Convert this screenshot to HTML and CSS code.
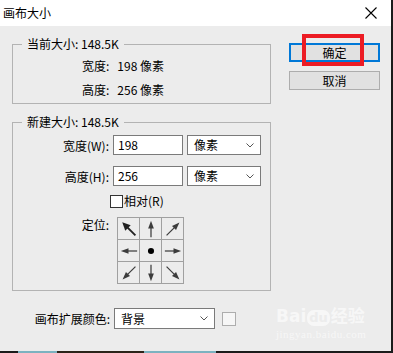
FILE: index.html
```html
<!DOCTYPE html>
<html lang="zh">
<head>
<meta charset="utf-8"/>
<title>画布大小</title>
<link rel="stylesheet" href="styles.css">
</head>
<body>
<div class="dialog">
  <div class="titlebar">
    <span class="title">画布大小</span>
    <svg class="close" width="12" height="12" viewBox="0 0 12 12"><path d="M0.5 0.5L11.5 11.5M11.5 0.5L0.5 11.5" stroke="#000" stroke-width="1.1" fill="none"/></svg>
  </div>
  <div class="content">
    <div class="main">
      <fieldset class="group group-current">
        <legend>当前大小: 148.5K</legend>
        <div class="info">宽度:<span class="val">198 像素</span></div>
        <div class="info">高度:<span class="val">256 像素</span></div>
      </fieldset>

      <fieldset class="group group-new">
        <legend>新建大小: 148.5K</legend>
        <div class="row">
          <label>宽度(W):</label>
          <div class="input">198</div>
          <div class="select">像素<svg class="chev" width="8" height="5" viewBox="0 0 8 5"><path d="M0.5 0.5L4 4L7.5 0.5" stroke="#555" fill="none"/></svg></div>
        </div>
        <div class="row row-h">
          <label>高度(H):</label>
          <div class="input">256</div>
          <div class="select">像素<svg class="chev" width="8" height="5" viewBox="0 0 8 5"><path d="M0.5 0.5L4 4L7.5 0.5" stroke="#555" fill="none"/></svg></div>
        </div>
        <div class="check-row">
          <span class="checkbox"></span>相对(R)
        </div>
        <div class="anchor-row">
          <label>定位:</label>
          <div class="anchor">
            <div class="cell"><svg viewBox="0 0 23 23"><g class="bold" transform="rotate(-45 11.5 11.5)"><line x1="11.5" y1="21" x2="11.5" y2="8"/><polygon points="11.5,1.5 7.5,10 15.5,10"/></g></svg></div>
            <div class="cell"><svg viewBox="0 0 23 23"><g><line x1="11.5" y1="20" x2="11.5" y2="9"/><polygon points="11.5,3 8.5,11 14.5,11"/></g></svg></div>
            <div class="cell"><svg viewBox="0 0 23 23"><g transform="rotate(45 11.5 11.5)"><line x1="11.5" y1="21" x2="11.5" y2="8"/><polygon points="11.5,2 8.5,10 14.5,10"/></g></svg></div>
            <div class="cell"><svg viewBox="0 0 23 23"><g transform="rotate(-90 11.5 11.5)"><line x1="11.5" y1="20" x2="11.5" y2="9"/><polygon points="11.5,3 8.5,11 14.5,11"/></g></svg></div>
            <div class="cell"><svg viewBox="0 0 23 23"><circle cx="11.5" cy="11.5" r="3.2" fill="#000"/></svg></div>
            <div class="cell"><svg viewBox="0 0 23 23"><g transform="rotate(90 11.5 11.5)"><line x1="11.5" y1="20" x2="11.5" y2="9"/><polygon points="11.5,3 8.5,11 14.5,11"/></g></svg></div>
            <div class="cell"><svg viewBox="0 0 23 23"><g transform="rotate(-135 11.5 11.5)"><line x1="11.5" y1="21" x2="11.5" y2="8"/><polygon points="11.5,2 8.5,10 14.5,10"/></g></svg></div>
            <div class="cell"><svg viewBox="0 0 23 23"><g transform="rotate(180 11.5 11.5)"><line x1="11.5" y1="20" x2="11.5" y2="9"/><polygon points="11.5,3 8.5,11 14.5,11"/></g></svg></div>
            <div class="cell"><svg viewBox="0 0 23 23"><g transform="rotate(135 11.5 11.5)"><line x1="11.5" y1="21" x2="11.5" y2="8"/><polygon points="11.5,2 8.5,10 14.5,10"/></g></svg></div>
          </div>
        </div>
      </fieldset>

      <div class="extend">
        <label>画布扩展颜色:</label>
        <div class="select select-wide">背景<svg class="chev" width="8" height="5" viewBox="0 0 8 5"><path d="M0.5 0.5L4 4L7.5 0.5" stroke="#555" fill="none"/></svg></div>
        <span class="swatch"></span>
      </div>
    </div>

    <div class="buttons">
      <div class="btn btn-default">确定</div>
      <div class="btn">取消</div>
    </div>
  </div>

  <!-- red highlight drawn over the OK button -->
  <div class="highlight"></div>

  <div class="watermark">
    <div class="wm-logo">Bai<span class="wm-du">du</span>经验</div>
    <div class="wm-url">jingyan.baidu.com</div>
  </div>
</div>
</body>
</html>
```

FILE: styles.css
```css
html, body {
    margin: 0;
    padding: 0;
}

body {
    width: 393px;
    height: 353px;
    overflow: hidden;
    font-family: "Noto Sans CJK SC", "Noto Sans", sans-serif;
    font-size: 12px;
    color: #000;
    background: linear-gradient(to right, #1b1b1b 18px, #7cb2c0 18px 57px, #2b2419 57px 144px, #7cb2c0 144px 216px, #1b1b1b 216px);
}

.dialog {
    position: relative;
    width: 391px;
    height: 351px;
    background-color: #ececec;
    overflow: hidden;
}

.titlebar {
    height: 26px;
    background-color: #fff;
    display: flex;
    align-items: center;
    justify-content: space-between;
    padding: 0 14px 0 3px;
}

.title {
    font-size: 12px;
    line-height: 16px;
}

.close {
    display: block;
}

.content {
    display: flex;
    padding-top: 10px;
}

.main {
    padding-left: 12px;
    width: 259px;
}

.group {
    margin: 0;
    border: 1px solid #b3b3b3;
    min-width: 0;
}

.group legend {
    margin-left: 9px;
    padding: 0 5px;
    line-height: 16px;
}

.group-current {
    padding: 2px 0 1px 0;
}

.info {
    line-height: 24px;
    padding-left: 69px;
}

.info .val {
    margin-left: 8px;
}

.group-new {
    margin-top: 10px;
    padding: 5px 0 6px 0;
}

.row {
    display: flex;
    align-items: center;
    gap: 4px;
    height: 20px;
}

.row-h {
    margin-top: 11px;
}

.row label {
    width: 96px;
    text-align: right;
}

.input {
    box-sizing: border-box;
    width: 70px;
    height: 20px;
    border: 1px solid #7a7a7a;
    background-color: #fff;
    padding-left: 4px;
    line-height: 18px;
}

.select {
    box-sizing: border-box;
    width: 74px;
    height: 20px;
    border: 1px solid #7a7a7a;
    background-color: #fff;
    padding: 0 6px 0 6px;
    line-height: 18px;
    display: flex;
    align-items: center;
    justify-content: space-between;
}

.chev {
    display: block;
}

.check-row {
    display: flex;
    align-items: center;
    margin-top: 8px;
    padding-left: 97px;
    height: 14px;
    line-height: 14px;
}

.checkbox {
    box-sizing: border-box;
    width: 13px;
    height: 13px;
    border: 1px solid #333;
    background-color: #fff;
    margin-right: 1px;
}

.anchor-row {
    display: flex;
    align-items: flex-start;
    margin-top: 9px;
}

.anchor-row label {
    width: 96px;
    text-align: right;
    line-height: 16px;
}

.anchor {
    margin-left: 8px;
    display: grid;
    grid-template-columns: repeat(3, 22px);
    grid-template-rows: repeat(3, 22px);
    border-top: 1px solid #a0a0a0;
    border-left: 1px solid #a0a0a0;
}

.cell {
    border-right: 1px solid #a0a0a0;
    border-bottom: 1px solid #a0a0a0;
}

.cell svg {
    display: block;
    width: 22px;
    height: 22px;
}

.cell line {
    stroke: #3c3c3c;
    stroke-width: 1.3;
}

.cell polygon {
    fill: #3c3c3c;
}

.cell .bold line {
    stroke: #222;
    stroke-width: 2;
}

.cell .bold polygon {
    fill: #222;
}

.extend {
    display: flex;
    align-items: center;
    margin-top: 17px;
    gap: 4px;
}

.extend label {
    width: 98px;
    text-align: right;
}

.select-wide {
    width: 101px;
    height: 21px;
}

.swatch {
    box-sizing: border-box;
    width: 14px;
    height: 14px;
    margin-left: 3px;
    border: 1px solid #adadad;
    background-color: #f6f6f6;
}

.buttons {
    margin-left: 18px;
    width: 91px;
}

.btn {
    box-sizing: border-box;
    height: 19px;
    border: 1px solid #adadad;
    background-color: #e1e1e1;
    text-align: center;
    line-height: 17px;
    margin-top: 9px;
}

.btn-default {
    margin-top: 7px;
    border: 2px solid #0078d7;
    line-height: 15px;
}

.highlight {
    position: absolute;
    left: 302px;
    top: 34px;
    width: 62px;
    height: 32px;
    box-sizing: border-box;
    border: 4px solid #ec1c24;
}

.watermark {
    position: absolute;
    left: 276px;
    top: 306px;
    color: rgba(255, 255, 255, 0.6);
    font-family: "DejaVu Sans", "Noto Sans CJK SC", sans-serif;
}

.wm-logo {
    font-size: 17px;
    font-weight: bold;
    line-height: 20px;
}

.wm-du {
    display: inline-block;
    background-color: rgba(255, 255, 255, 0.6);
    color: #ececec;
    border-radius: 7px;
    padding: 0 2px;
    margin: 0 1px;
    font-size: 13px;
    line-height: 16px;
}

.wm-url {
    font-family: "Liberation Serif", serif;
    font-size: 11px;
    line-height: 14px;
    margin-top: 1px;
    letter-spacing: 0.5px;
}
```
